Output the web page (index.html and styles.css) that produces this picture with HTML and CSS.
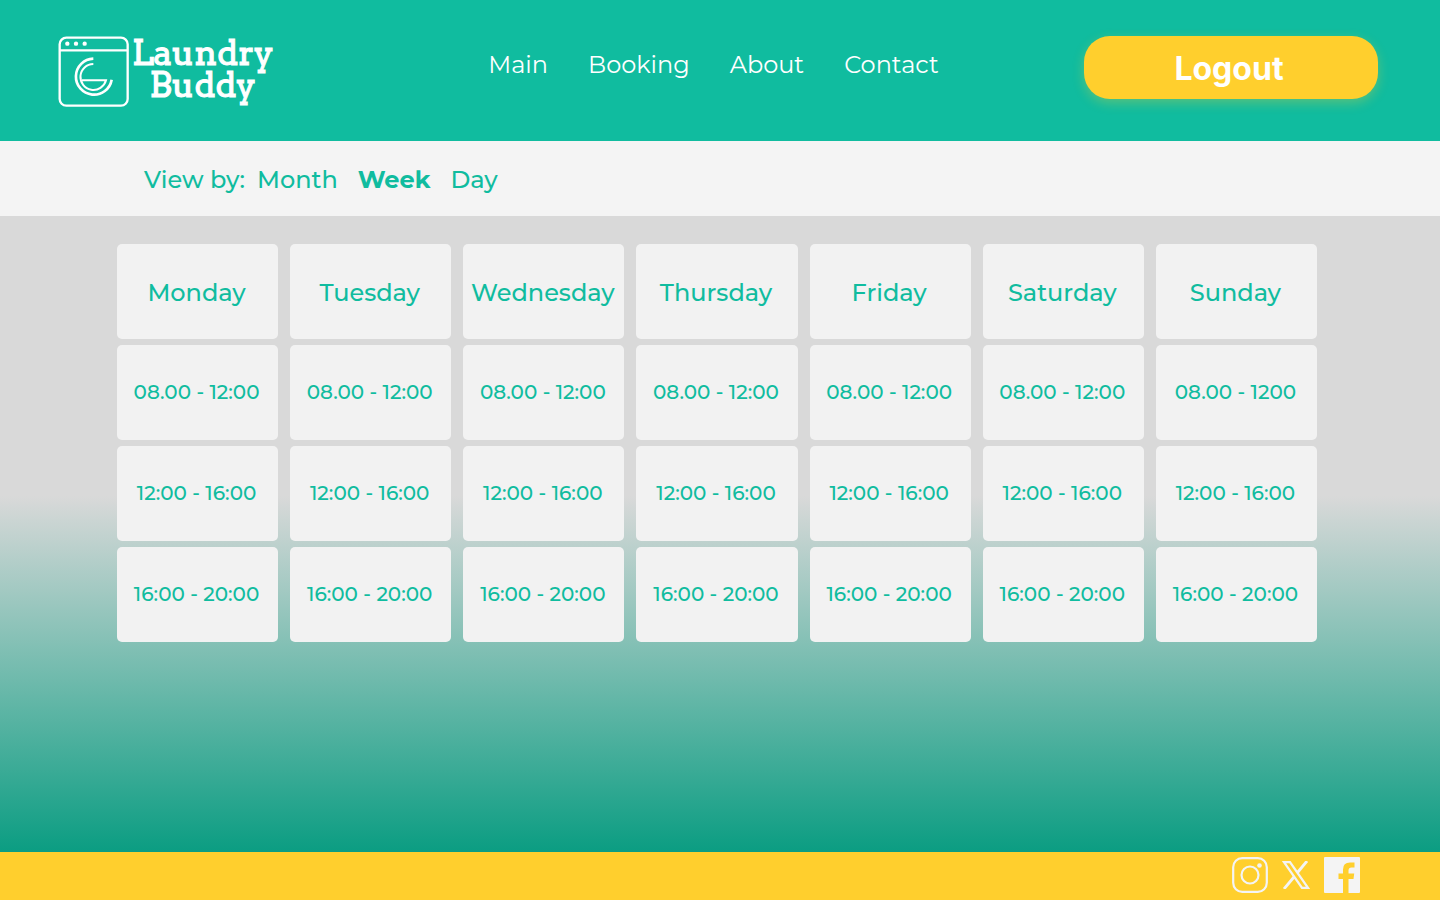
FILE: index.html
```html
<!DOCTYPE html>
<html lang="en">
<head>
<meta charset="utf-8">
<meta name="viewport" content="width=device-width, initial-scale=1">
<title>Laundry Buddy</title>
<link rel="stylesheet" href="styles.css">
</head>
<body>
<header class="header">
  <a class="logo" href="#" aria-label="Laundry Buddy home">
    <svg class="logo-mark" viewBox="0 0 213 213" fill="none" stroke="#fff" aria-hidden="true">
      <rect x="5" y="5" width="204" height="204" rx="20" stroke-width="7"/>
      <path d="M4 43H209" stroke-width="7"/>
      <g fill="#fff" stroke="none"><circle cx="28" cy="23" r="6.500"/><circle cx="54" cy="23" r="6.500"/><circle cx="80" cy="23" r="6.500"/></g>
      <path d="M106 68A54 54 0 1 0 161 131" stroke-width="8"/>
      <path d="M106 84A39 39 0 1 0 144 133H72" stroke-width="6"/>
    </svg>
    <span class="logo-text"><span>Laundry</span><span>Buddy</span></span>
  </a>
  <nav class="nav">
    <a href="#">Main</a>
    <a href="#">Booking</a>
    <a href="#">About</a>
    <a href="#">Contact</a>
  </nav>
  <button class="logout" type="button">Logout</button>
</header>
<nav class="view-bar" aria-labelledby="view-label">
  <span class="view-label" id="view-label">View by:</span>
  <a href="#">Month</a>
  <a class="active" href="#" aria-current="true">Week</a>
  <a href="#">Day</a>
</nav>
<main class="main">
  <table class="schedule">
    <thead>
      <tr><th scope="col">Monday</th><th scope="col">Tuesday</th><th scope="col">Wednesday</th><th scope="col">Thursday</th><th scope="col">Friday</th><th scope="col">Saturday</th><th scope="col">Sunday</th></tr>
    </thead>
    <tbody>
      <tr>
        <td><button type="button">08.00 - 12:00</button></td>
        <td><button type="button">08.00 - 12:00</button></td>
        <td><button type="button">08.00 - 12:00</button></td>
        <td><button type="button">08.00 - 12:00</button></td>
        <td><button type="button">08.00 - 12:00</button></td>
        <td><button type="button">08.00 - 12:00</button></td>
        <td><button type="button">08.00 - 1200</button></td>
      </tr>
      <tr>
        <td><button type="button">12:00 - 16:00</button></td>
        <td><button type="button">12:00 - 16:00</button></td>
        <td><button type="button">12:00 - 16:00</button></td>
        <td><button type="button">12:00 - 16:00</button></td>
        <td><button type="button">12:00 - 16:00</button></td>
        <td><button type="button">12:00 - 16:00</button></td>
        <td><button type="button">12:00 - 16:00</button></td>
      </tr>
      <tr>
        <td><button type="button">16:00 - 20:00</button></td>
        <td><button type="button">16:00 - 20:00</button></td>
        <td><button type="button">16:00 - 20:00</button></td>
        <td><button type="button">16:00 - 20:00</button></td>
        <td><button type="button">16:00 - 20:00</button></td>
        <td><button type="button">16:00 - 20:00</button></td>
        <td><button type="button">16:00 - 20:00</button></td>
      </tr>
    </tbody>
  </table>
</main>
<footer class="footer">
  <a href="#" aria-label="Instagram"><svg class="icon" viewBox="0 0 36 36" fill="none" stroke="#f4f4f4" stroke-width="2.200"><rect x="1.200" y="1.200" width="33.600" height="33.600" rx="9"/><circle cx="18" cy="18" r="8.500"/><circle cx="27.500" cy="8.500" r="2.300" fill="#f4f4f4" stroke="none"/></svg></a>
  <a href="#" aria-label="X"><svg class="icon-x" viewBox="0 0 28 28" fill="none" stroke="#f4f4f4" stroke-width="2.300"><path d="M2 1.200H8L26 26.800H20Z"/><path d="M25 0L15.500 11.500M12 16L2 28" stroke-width="2.800"/></svg></a>
  <a href="#" aria-label="Facebook"><svg class="icon" viewBox="0 0 36 36"><path fill="#f4f4f4" fill-rule="evenodd" d="M1 0H35Q36 0 36 1V35Q36 36 35 36H24.500V22H29.500L30.200 16.500H24.500V13.500Q24.500 10.500 27.500 10.500H30.500V5.500H26Q19 5.500 19 12.500V16.500H14.500V22H19V36H1Q0 36 0 35V1Q0 0 1 0Z"/></svg></a>
</footer>
</body>
</html>
```
FILE: styles.css
```css
* { box-sizing: border-box; }
body {
  margin: 0;
  min-height: 100vh;
  display: flex;
  flex-direction: column;
  font-family: Montserrat, Inter, sans-serif;
  font-size: 24px;
  font-weight: 500;
  line-height: 32px;
  color: #10bc9f;
}
a { color: inherit; text-decoration: none; }
button { border: 0; font-family: inherit; cursor: pointer; }

.header {
  display: grid;
  grid-template-columns: 1fr auto 1fr;
  align-items: start;
  padding: 36px 62px 34px 58px;
  background: #10bc9f;
  color: #fff;
}
.logo { display: flex; align-items: flex-start; gap: 3px; }
.logo-mark { width: 71px; height: 71px; }
.logo-text {
  display: flex;
  flex-direction: column;
  align-items: center;
  font-family: Arvo, "DejaVu Serif", serif;
  font-size: 34px;
  font-weight: 400;
  line-height: 32px;
  padding-top: 1px;
  -webkit-text-stroke: 1px #fff;
}
.nav {
  display: flex;
  gap: 40px;
  padding: 13px 9px 0 0;
  font-weight: 400;
}
.logout {
  justify-self: end;
  width: 294px;
  height: 63px;
  border-radius: 26px;
  background: #ffcf2d;
  box-shadow: 0 4px 12px rgba(255, 207, 45, 0.3);
  color: #fff;
  font-family: Inter, sans-serif;
  font-size: 32px;
  font-weight: 700;
  line-height: 40px;
  padding: 2px 4px 0 0;
}

.view-bar {
  display: flex;
  gap: 20px;
  padding: 23px 144px 20px;
  background: #f4f4f4;
}
.view-label { margin-right: -8px; }
.active { font-weight: 700; }

.main {
  flex: 1;
  padding: 22px 111px 24px 105px;
  background: linear-gradient(#d9d9d9 44%, #0b9d82);
}
.schedule {
  width: 100%;
  table-layout: fixed;
  border-collapse: separate;
  border-spacing: 12px 6px;
}
.schedule th, .schedule td {
  height: 95px;
  padding: 0;
  border-radius: 5px;
  background: #f2f2f2;
}
.schedule th { font-weight: 500; padding: 2px 2px 0 0; }
.schedule button {
  display: block;
  width: 100%;
  height: 95px;
  padding: 0 2px 2px 0;
  background: none;
  color: inherit;
  font-size: 20px;
  font-weight: 500;
}

.footer {
  display: flex;
  justify-content: flex-end;
  align-items: center;
  gap: 14px;
  height: 48px;
  padding: 0 80px 2px;
  background: #ffcf2d;
}
.footer a { display: flex; }
.icon { width: 36px; height: 36px; }
.icon-x { width: 28px; height: 28px; }
```
